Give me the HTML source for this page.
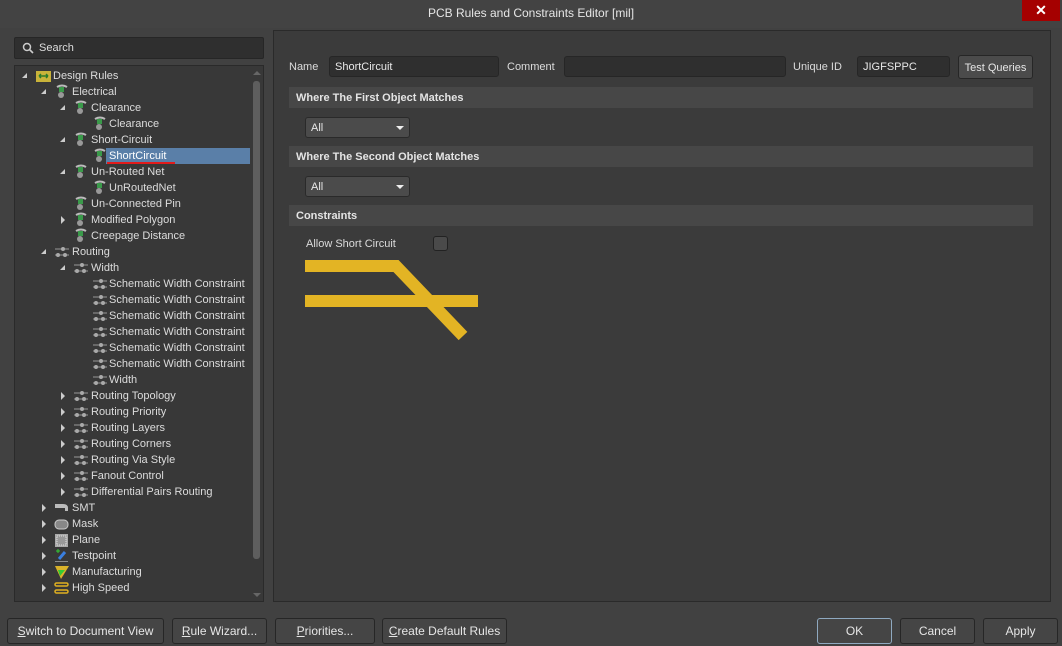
<!DOCTYPE html><html><head><style>
*{margin:0;padding:0;box-sizing:border-box}
html,body{overflow:hidden}
body{width:1062px;height:646px;background:#414141;font-family:"Liberation Sans",sans-serif;font-size:11px;color:#dcdcdc;position:relative}
.a{position:absolute}
.title{left:0;top:0;width:1062px;height:28px;background:#434343;text-align:center;line-height:27px;font-size:12px;color:#e6e6e6}
.close{left:1022px;top:0;width:38px;height:21px;background:#a50000;color:#fff;text-align:center;font-size:14px;line-height:20px;font-weight:bold}
.panel{background:#383838;border:1px solid #2a2a2a}
.row{position:absolute;height:16px;line-height:17px;white-space:nowrap}
.ar{position:absolute;width:0;height:0}
.exp{border-left:5px solid transparent;border-bottom:5px solid #ccc;}
.col{border-top:4px solid transparent;border-bottom:4px solid transparent;border-left:4px solid #ccc}
.ic{position:absolute;width:15px;height:14px}
.hdr{background:#474747;height:21px;line-height:23px;font-weight:bold;padding-left:7px;color:#e4e4e4}
.inp{background:#2f2f2f;border:1px solid #262626;border-radius:3px;height:21px;line-height:21px;padding-left:5px;color:#e8e8e8}
.dd{background:#4b4b4b;border:1px solid #2a2a2a;border-radius:3px;height:21px;line-height:21px;padding-left:5px;color:#e8e8e8}
.dd:after{content:"";position:absolute;right:5px;top:8px;border-left:4px solid transparent;border-right:4px solid transparent;border-top:4px solid #eee}
.btn{background:#454545;border:1px solid #262626;border-radius:3px;height:26px;line-height:25px;text-align:center;font-size:12px;color:#e6e6e6}
</style></head><body>
<div class="a title">PCB Rules and Constraints Editor [mil]</div>
<div class="a close">✕</div>

<div class="a" style="left:14px;top:37px;width:250px;height:22px;background:#2f2f2f;border:1px solid #262626;border-radius:2px"></div>
<svg class="a" style="left:22px;top:42px" width="12" height="12"><circle cx="5" cy="5" r="3.5" stroke="#ccc" stroke-width="1.5" fill="none"/><line x1="7.5" y1="7.5" x2="11" y2="11" stroke="#ccc" stroke-width="1.6"/></svg>
<div class="a" style="left:39px;top:42px;color:#ddd">Search</div>

<div class="a panel" style="left:14px;top:65px;width:250px;height:537px;overflow:hidden">
<svg width="0" height="0" style="position:absolute"><defs>
<g id="el"><path d="M3 3 Q8 0 13 3" stroke="#bbb" stroke-width="2" fill="none"/><rect x="5" y="3" width="5" height="5" fill="#3a9a4a"/><circle cx="7" cy="11" r="3" fill="#999"/></g>
<g id="rt"><line x1="1" y1="4" x2="15" y2="4" stroke="#999"/><line x1="1" y1="10" x2="15" y2="10" stroke="#999"/><circle cx="9" cy="4" r="2" fill="#aaa"/><circle cx="4" cy="10" r="2" fill="#aaa"/><circle cx="11" cy="10" r="2" fill="#aaa"/></g>
</defs></svg>
<div style="position:absolute;left:-14px;top:-65px;width:264px;height:537px">
<div class="a" style="left:105px;top:147px;width:144px;height:16px;background:#5a7fa8"></div>
<div class="a" style="left:106px;top:161px;width:68px;height:2px;background:#e21b1b"></div>

<div class="ar exp" style="left:21px;top:72px"></div><svg class="ic" style="left:35px;top:68px"><rect x="0" y="2" width="15" height="11" fill="#c9b33a"/><path d="M3 7h9M3 7l2-2M3 7l2 2M12 7l-2-2M12 7l-2 2" stroke="#2b7a2b" stroke-width="1.5"/></svg><div class="row" style="left:52px;top:67px">Design Rules</div>
<div class="ar exp" style="left:40px;top:88px"></div><svg class="ic" style="left:53px;top:83px"><use href="#el"/></svg><div class="row" style="left:71px;top:83px">Electrical</div>
<div class="ar exp" style="left:59px;top:104px"></div><svg class="ic" style="left:72px;top:99px"><use href="#el"/></svg><div class="row" style="left:90px;top:99px">Clearance</div>
<svg class="ic" style="left:91px;top:115px"><use href="#el"/></svg><div class="row" style="left:108px;top:115px">Clearance</div>
<div class="ar exp" style="left:59px;top:136px"></div><svg class="ic" style="left:72px;top:131px"><use href="#el"/></svg><div class="row" style="left:90px;top:131px">Short-Circuit</div>
<svg class="ic" style="left:91px;top:147px"><use href="#el"/></svg><div class="row" style="left:108px;top:147px;color:#fff">ShortCircuit</div>
<div class="ar exp" style="left:59px;top:168px"></div><svg class="ic" style="left:72px;top:163px"><use href="#el"/></svg><div class="row" style="left:90px;top:163px">Un-Routed Net</div>
<svg class="ic" style="left:91px;top:179px"><use href="#el"/></svg><div class="row" style="left:108px;top:179px">UnRoutedNet</div>
<svg class="ic" style="left:72px;top:195px"><use href="#el"/></svg><div class="row" style="left:90px;top:195px">Un-Connected Pin</div>
<div class="ar col" style="left:60px;top:215px"></div><svg class="ic" style="left:72px;top:211px"><use href="#el"/></svg><div class="row" style="left:90px;top:211px">Modified Polygon</div>
<svg class="ic" style="left:72px;top:227px"><use href="#el"/></svg><div class="row" style="left:90px;top:227px">Creepage Distance</div>
<div class="ar exp" style="left:40px;top:248px"></div><svg class="ic" style="left:53px;top:244px"><use href="#rt"/></svg><div class="row" style="left:71px;top:243px">Routing</div>
<div class="ar exp" style="left:59px;top:264px"></div><svg class="ic" style="left:72px;top:260px"><use href="#rt"/></svg><div class="row" style="left:90px;top:259px">Width</div>
<svg class="ic" style="left:91px;top:276px"><use href="#rt"/></svg><div class="row" style="left:108px;top:275px">Schematic Width Constraint</div>
<svg class="ic" style="left:91px;top:292px"><use href="#rt"/></svg><div class="row" style="left:108px;top:291px">Schematic Width Constraint</div>
<svg class="ic" style="left:91px;top:308px"><use href="#rt"/></svg><div class="row" style="left:108px;top:307px">Schematic Width Constraint</div>
<svg class="ic" style="left:91px;top:324px"><use href="#rt"/></svg><div class="row" style="left:108px;top:323px">Schematic Width Constraint</div>
<svg class="ic" style="left:91px;top:340px"><use href="#rt"/></svg><div class="row" style="left:108px;top:339px">Schematic Width Constraint</div>
<svg class="ic" style="left:91px;top:356px"><use href="#rt"/></svg><div class="row" style="left:108px;top:355px">Schematic Width Constraint</div>
<svg class="ic" style="left:91px;top:372px"><use href="#rt"/></svg><div class="row" style="left:108px;top:371px">Width</div>
<div class="ar col" style="left:60px;top:391px"></div><svg class="ic" style="left:72px;top:388px"><use href="#rt"/></svg><div class="row" style="left:90px;top:387px">Routing Topology</div>
<div class="ar col" style="left:60px;top:407px"></div><svg class="ic" style="left:72px;top:404px"><use href="#rt"/></svg><div class="row" style="left:90px;top:403px">Routing Priority</div>
<div class="ar col" style="left:60px;top:423px"></div><svg class="ic" style="left:72px;top:420px"><use href="#rt"/></svg><div class="row" style="left:90px;top:419px">Routing Layers</div>
<div class="ar col" style="left:60px;top:439px"></div><svg class="ic" style="left:72px;top:436px"><use href="#rt"/></svg><div class="row" style="left:90px;top:435px">Routing Corners</div>
<div class="ar col" style="left:60px;top:455px"></div><svg class="ic" style="left:72px;top:452px"><use href="#rt"/></svg><div class="row" style="left:90px;top:451px">Routing Via Style</div>
<div class="ar col" style="left:60px;top:471px"></div><svg class="ic" style="left:72px;top:468px"><use href="#rt"/></svg><div class="row" style="left:90px;top:467px">Fanout Control</div>
<div class="ar col" style="left:60px;top:487px"></div><svg class="ic" style="left:72px;top:484px"><use href="#rt"/></svg><div class="row" style="left:90px;top:483px">Differential Pairs Routing</div>
<div class="ar col" style="left:41px;top:503px"></div><svg class="ic" style="left:53px;top:500px"><path d="M1 3h8q5 0 5 4v3h-3v-3h-10z" fill="#bbb"/></svg><div class="row" style="left:71px;top:499px">SMT</div>
<div class="ar col" style="left:41px;top:519px"></div><svg class="ic" style="left:53px;top:516px"><rect x="1" y="3" width="13" height="9" rx="4" fill="#888" stroke="#ccc"/></svg><div class="row" style="left:71px;top:515px">Mask</div>
<div class="ar col" style="left:41px;top:535px"></div><svg class="ic" style="left:53px;top:532px"><rect x="1" y="1" width="13" height="13" fill="#aaa"/><rect x="3" y="3" width="9" height="9" fill="#999" stroke="#ddd" stroke-dasharray="1 1"/></svg><div class="row" style="left:71px;top:531px">Plane</div>
<div class="ar col" style="left:41px;top:551px"></div><svg class="ic" style="left:53px;top:547px"><path d="M2 3h4M4 1v4" stroke="#3c3" /><path d="M5 11l6-7" stroke="#3a7fe0" stroke-width="3"/><line x1="1" y1="14" x2="14" y2="14" stroke="#ddd"/></svg><div class="row" style="left:71px;top:547px">Testpoint</div>
<div class="ar col" style="left:41px;top:567px"></div><svg class="ic" style="left:53px;top:564px"><path d="M1 1h14l-8 13z" fill="#d9b22a"/><path d="M4 5h7l-5 6z" fill="#3c3"/></svg><div class="row" style="left:71px;top:563px">Manufacturing</div>
<div class="ar col" style="left:41px;top:583px"></div><svg class="ic" style="left:53px;top:580px"><rect x="1" y="2" width="13" height="3" rx="1.5" fill="none" stroke="#e0b020" stroke-width="1.5"/><rect x="1" y="9" width="13" height="3" rx="1.5" fill="none" stroke="#e0b020" stroke-width="1.5"/></svg><div class="row" style="left:71px;top:579px">High Speed</div>
<div class="a" style="left:252px;top:80px;width:7px;height:478px;background:#5e5e5e;border-radius:3px"></div>
<div class="a" style="left:252px;top:70px;border-left:4px solid transparent;border-right:4px solid transparent;border-bottom:4px solid #666"></div>
<div class="a" style="left:252px;top:592px;border-left:4px solid transparent;border-right:4px solid transparent;border-top:4px solid #666"></div>
</div></div>

<div class="a panel" style="left:273px;top:30px;width:778px;height:572px;background:#3b3b3b"></div>
<div class="a" style="left:289px;top:61px">Name</div>
<div class="a inp" style="left:329px;top:56px;width:170px">ShortCircuit</div>
<div class="a" style="left:507px;top:61px">Comment</div>
<div class="a inp" style="left:564px;top:56px;width:222px"></div>
<div class="a" style="left:793px;top:61px">Unique ID</div>
<div class="a inp" style="left:857px;top:56px;width:93px">JIGFSPPC</div>
<div class="a btn" style="left:958px;top:55px;width:75px;height:24px;line-height:24px;font-size:11px;background:#4b4b4b">Test Queries</div>

<div class="a hdr" style="left:289px;top:87px;width:744px">Where The First Object Matches</div>
<div class="a dd" style="left:305px;top:117px;width:105px">All</div>
<div class="a hdr" style="left:289px;top:146px;width:744px">Where The Second Object Matches</div>
<div class="a dd" style="left:305px;top:176px;width:105px">All</div>
<div class="a hdr" style="left:289px;top:205px;width:744px">Constraints</div>
<div class="a" style="left:306px;top:238px">Allow Short Circuit</div>
<div class="a" style="left:433px;top:236px;width:15px;height:15px;background:#4a4a4a;border:1px solid #222;border-radius:3px"></div>

<svg class="a" style="left:300px;top:255px" width="190" height="95">
<path d="M5 11H96L163 81" stroke="#e3b424" stroke-width="12" fill="none"/>
<path d="M5 46H178" stroke="#e3b424" stroke-width="12"/>
</svg>

<div class="a btn" style="left:7px;top:618px;width:157px"><u>S</u>witch to Document View</div>
<div class="a btn" style="left:172px;top:618px;width:95px"><u>R</u>ule Wizard...</div>
<div class="a btn" style="left:275px;top:618px;width:100px"><u>P</u>riorities...</div>
<div class="a btn" style="left:382px;top:618px;width:125px"><u>C</u>reate Default Rules</div>
<div class="a btn" style="left:817px;top:618px;width:75px;border-color:#8fa9c0">OK</div>
<div class="a btn" style="left:900px;top:618px;width:75px">Cancel</div>
<div class="a btn" style="left:983px;top:618px;width:75px">Apply</div>
</body></html>
